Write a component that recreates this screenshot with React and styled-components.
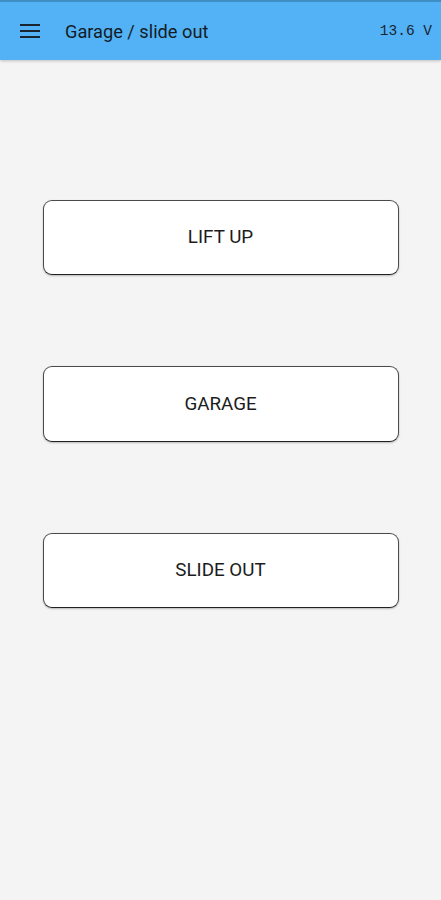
import React from "react";
import styled, { createGlobalStyle } from "styled-components";

const Global = createGlobalStyle`
  html, body { margin: 0; padding: 0; background: #f4f4f4; }
  body { font-family: Roboto, "Noto Sans", sans-serif; }
`;

const Page = styled.div`
  min-height: 900px;
  background: #f4f4f4;
  display: flex;
  flex-direction: column;
`;

const AppBar = styled.header`
  height: 58px;
  border-top: 2px solid #3f8fc5;
  background: #52b2f5;
  display: flex;
  align-items: center;
  padding: 0 9px 0 20px;
  box-shadow: 0 1px 3px rgba(0, 0, 0, 0.22);
  position: relative;
  z-index: 1;
`;

const MenuIcon = styled.svg`
  width: 20px;
  height: 14px;
  flex: none;
  margin-right: 25px;
`;

const Title = styled.h1`
  margin: 0;
  flex: 1;
  font-size: 18.2px;
  font-weight: 400;
  color: #121c26;
`;

const Voltage = styled.span`
  font-family: "Liberation Mono", "DejaVu Sans Mono", monospace;
  font-size: 14.5px;
  color: #1a2530;
`;

const Content = styled.main`
  display: flex;
  flex-direction: column;
  align-items: center;
  gap: 91px;
  padding-top: 139.5px;
`;

const ActionButton = styled.button`
  width: 356px;
  height: 75.5px;
  box-sizing: border-box;
  background: #ffffff;
  border: 1.5px solid #4a4a4a;
  border-bottom-color: #222;
  border-radius: 9px;
  box-shadow: 0 1px 2px rgba(0, 0, 0, 0.25);
  font-family: Roboto, "Noto Sans", sans-serif;
  font-size: 18.8px;
  font-weight: 400;
  color: #1c1c1c;
  cursor: pointer;
`;

export default function App() {
  return (
    <Page>
      <Global />
      <AppBar>
        <MenuIcon viewBox="0 0 20 14">
          <rect x="0" y="0" width="20" height="2" fill="#1a2430" />
          <rect x="0" y="6" width="20" height="2" fill="#1a2430" />
          <rect x="0" y="12" width="20" height="2" fill="#1a2430" />
        </MenuIcon>
        <Title>Garage / slide out</Title>
        <Voltage>13.6 V</Voltage>
      </AppBar>
      <Content>
        <ActionButton>LIFT UP</ActionButton>
        <ActionButton>GARAGE</ActionButton>
        <ActionButton>SLIDE OUT</ActionButton>
      </Content>
    </Page>
  );
}
